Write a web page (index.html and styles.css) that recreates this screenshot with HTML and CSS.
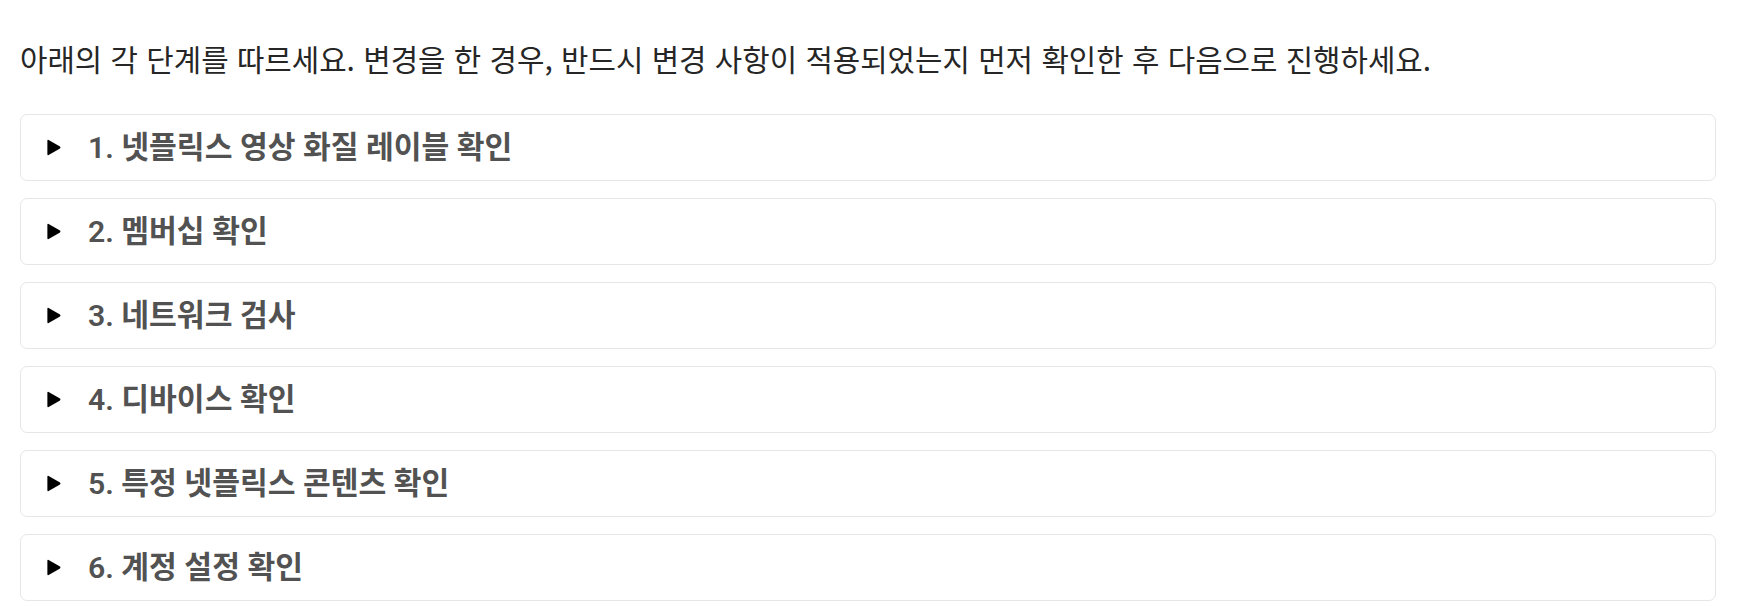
FILE: index.html
```html
<!DOCTYPE html>
<html lang="ko">
<head>
<meta charset="utf-8">
<title>넷플릭스 영상 화질 문제 해결</title>
<link rel="stylesheet" href="styles.css">
</head>
<body>
<main class="page">
  <p class="intro">아래의 각 단계를 따르세요. 변경을 한 경우, 반드시 변경 사항이 적용되었는지 먼저 확인한 후 다음으로 진행하세요.</p>
  <div class="steps">
    <details class="step"><summary class="step-head"><svg class="caret" width="14" height="17" viewBox="0 0 14 17"><path d="M1.6 0.9 L13 7.6 Q14 8.5 13 9.4 L1.6 16.1 Q0.4 16.6 0.4 15.2 L0.4 1.8 Q0.4 0.4 1.6 0.9 Z" fill="#000"/></svg><span class="step-title">1. 넷플릭스 영상 화질 레이블 확인</span></summary></details>
    <details class="step"><summary class="step-head"><svg class="caret" width="14" height="17" viewBox="0 0 14 17"><path d="M1.6 0.9 L13 7.6 Q14 8.5 13 9.4 L1.6 16.1 Q0.4 16.6 0.4 15.2 L0.4 1.8 Q0.4 0.4 1.6 0.9 Z" fill="#000"/></svg><span class="step-title">2. 멤버십 확인</span></summary></details>
    <details class="step"><summary class="step-head"><svg class="caret" width="14" height="17" viewBox="0 0 14 17"><path d="M1.6 0.9 L13 7.6 Q14 8.5 13 9.4 L1.6 16.1 Q0.4 16.6 0.4 15.2 L0.4 1.8 Q0.4 0.4 1.6 0.9 Z" fill="#000"/></svg><span class="step-title">3. 네트워크 검사</span></summary></details>
    <details class="step"><summary class="step-head"><svg class="caret" width="14" height="17" viewBox="0 0 14 17"><path d="M1.6 0.9 L13 7.6 Q14 8.5 13 9.4 L1.6 16.1 Q0.4 16.6 0.4 15.2 L0.4 1.8 Q0.4 0.4 1.6 0.9 Z" fill="#000"/></svg><span class="step-title">4. 디바이스 확인</span></summary></details>
    <details class="step"><summary class="step-head"><svg class="caret" width="14" height="17" viewBox="0 0 14 17"><path d="M1.6 0.9 L13 7.6 Q14 8.5 13 9.4 L1.6 16.1 Q0.4 16.6 0.4 15.2 L0.4 1.8 Q0.4 0.4 1.6 0.9 Z" fill="#000"/></svg><span class="step-title">5. 특정 넷플릭스 콘텐츠 확인</span></summary></details>
    <details class="step"><summary class="step-head"><svg class="caret" width="14" height="17" viewBox="0 0 14 17"><path d="M1.6 0.9 L13 7.6 Q14 8.5 13 9.4 L1.6 16.1 Q0.4 16.6 0.4 15.2 L0.4 1.8 Q0.4 0.4 1.6 0.9 Z" fill="#000"/></svg><span class="step-title">6. 계정 설정 확인</span></summary></details>
  </div>
</main>
</body>
</html>
```
FILE: styles.css
```css
html, body {
  margin: 0;
  padding: 0;
  background: #ffffff;
}

.page {
  padding: 0 40px 0 20px;
  font-family: "Noto Sans CJK KR", "Noto Sans", sans-serif;
}

.intro {
  margin: 0;
  padding-top: 38px;
  font-size: 29.8px;
  line-height: 40px;
  color: #262626;
}

.steps {
  display: flex;
  flex-direction: column;
  gap: 17px;
  margin-top: 36px;
}

.step {
  border: 1px solid #e6e6e6;
  border-radius: 7px;
  background: #fff;
}

.step-head {
  list-style: none;
  display: flex;
  align-items: center;
  height: 65px;
  padding-left: 26px;
  cursor: pointer;
}

.step-head::-webkit-details-marker {
  display: none;
}

.caret {
  flex: none;
  display: block;
}

.step-title {
  margin-left: 27px;
  margin-bottom: 5px;
  font-family: Roboto, "Noto Sans CJK KR", sans-serif;
  font-size: 30.2px;
  font-weight: 600;
  color: #525252;
}
```
